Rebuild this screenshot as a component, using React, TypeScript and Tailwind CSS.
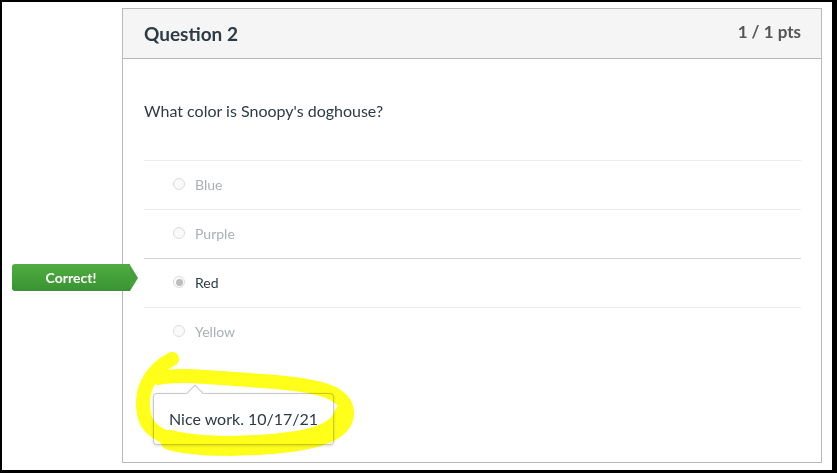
import React from "react";

const answers = [
  { label: "Blue", picked: false },
  { label: "Purple", picked: false },
  { label: "Red", picked: true },
  { label: "Yellow", picked: false },
];

function Radio({ picked }: { picked: boolean }) {
  return (
    <span className="flex h-[12px] w-[12px] items-center justify-center rounded-full border border-[#dcdcdc] bg-[#fafafa]">
      {picked && <span className="h-[7px] w-[7px] rounded-full bg-[#bdbdbd]" />}
    </span>
  );
}

export default function App() {
  return (
    <div
      className="relative box-border h-[473px] w-[837px] overflow-hidden border-b-[3px] border-l-2 border-r-[5px] border-t-2 border-black bg-white text-[#2d3b45]"
      style={{ fontFamily: "Lato, 'Open Sans', sans-serif" }}
    >
      <div className="ml-[120px] mt-[6px] box-border h-[455px] w-[700px] border border-[#b9b9b9] bg-white">
        <div className="flex h-[50px] items-center justify-between border-b border-[#b9b9b9] bg-[#f5f5f5] pl-[21px] pr-[20px]">
          <h2 className="text-[19px] font-bold leading-none">Question 2</h2>
          <span className="-mt-[5px] text-[17px] font-bold leading-none text-[#555]">1 / 1 pts</span>
        </div>

        <div className="pl-[21px] pr-[20px] pt-[40px]">
          <p className="text-[16px] leading-[24px]">What color is Snoopy's doghouse?</p>

          <div className="mt-[37px]">
            {answers.map((a) => (
              <div
                key={a.label}
                className={`flex h-[49px] items-center gap-[10px] border-t pb-[2px] pl-[29px] text-[14px] ${
                  a.picked ? "border-[#d4d4d4] text-[#2d3b45]" : "border-[#ececec] text-[#a9b0b5]"
                }`}
              >
                <Radio picked={a.picked} />
                <span>{a.label}</span>
              </div>
            ))}
          </div>

          <div className="relative ml-[9px] mt-[37px] inline-block rounded-[4px] border border-[#c8c8c8] bg-white px-[15px] py-[13px] shadow-[0_1px_3px_rgba(0,0,0,0.15)]">
            <span className="absolute -top-[7px] left-[35px] h-[12px] w-[12px] rotate-45 border-l border-t border-[#c8c8c8] bg-white" />
            <span className="relative text-[16px] leading-[24px]">Nice work. 10/17/21</span>
          </div>
        </div>
      </div>

      <div className="absolute left-[10px] top-[262px] flex items-center">
        <div className="flex h-[27px] w-[118px] items-center justify-center rounded-l-[3px] bg-gradient-to-b from-[#4fae41] to-[#3a9232] text-[14px] font-bold text-white">
          Correct!
        </div>
        <div className="h-0 w-0 border-y-[13.5px] border-l-[8px] border-y-transparent border-l-[#43a03a]" />
      </div>

      {/* highlighter scribble */}
      <svg
        className="pointer-events-none absolute -left-[2px] -top-[2px] mix-blend-multiply"
        width="837"
        height="473"
        viewBox="0 0 837 473"
      >
        <g fill="none" stroke="#ffff1a" strokeLinecap="round" strokeLinejoin="round">
          <path
            d="M 172 359 C 150 370, 138 392, 145 418 C 153 444, 205 449, 260 447 C 312 445, 348 436, 347 412 C 346 393, 322 385, 262 381 C 212 378, 182 373, 158 378"
            strokeWidth="14"
          />
          <path d="M 170 440 C 200 448, 250 447, 290 442 C 320 438, 340 430, 344 414" strokeWidth="20" />
        </g>
      </svg>
    </div>
  );
}
